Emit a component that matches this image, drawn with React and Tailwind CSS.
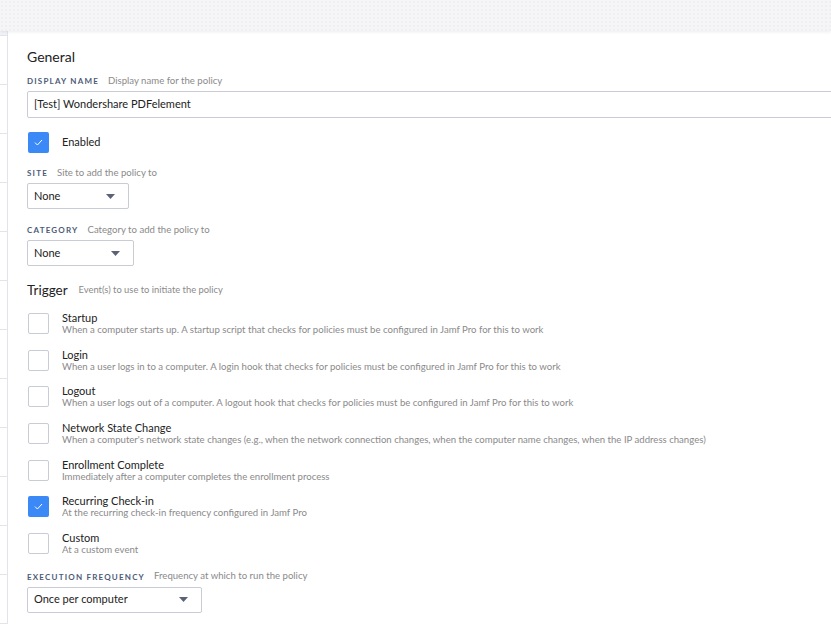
import React from "react";

const font = { fontFamily: "Lato, 'Open Sans', 'Liberation Sans', sans-serif" };

function Caret() {
  return (
    <svg width="9" height="5" viewBox="0 0 9 5" className="shrink-0">
      <path d="M0 0 L9 0 L4.5 5 Z" fill="#5b6275" />
    </svg>
  );
}

function Check({ checked }) {
  if (checked) {
    return (
      <div className="w-[21px] h-[21px] rounded-[2px] bg-[#3b89f6] flex items-center justify-center shrink-0">
        <svg width="9" height="7" viewBox="0 0 9 7">
          <path d="M1 3.6 L3.4 6 L8 1" fill="none" stroke="#fff" strokeWidth="1" />
        </svg>
      </div>
    );
  }
  return <div className="w-[21px] h-[21px] rounded-[2px] border border-[#c9ccd4] bg-white shrink-0" />;
}

function Label({ title, desc }) {
  return (
    <div className="flex items-center h-[12px] gap-[9px]">
      <span className="text-[8px] font-bold tracking-[1.2px] text-[#4d5b78] uppercase">{title}</span>
      <span className="text-[9.6px] text-[#8a8a8a]">{desc}</span>
    </div>
  );
}

function Select({ value, width }) {
  return (
    <div
      className="h-[26px] border border-[#c9ccd4] rounded-[2px] bg-white flex items-center justify-between pl-[6px] pr-[13px]"
      style={{ width }}
    >
      <span className="text-[11px] text-[#222]">{value}</span>
      <Caret />
    </div>
  );
}

const triggers = [
  ["Startup", "When a computer starts up. A startup script that checks for policies must be configured in Jamf Pro for this to work", false],
  ["Login", "When a user logs in to a computer. A login hook that checks for policies must be configured in Jamf Pro for this to work", false],
  ["Logout", "When a user logs out of a computer. A logout hook that checks for policies must be configured in Jamf Pro for this to work", false],
  ["Network State Change", "When a computer's network state changes (e.g., when the network connection changes, when the computer name changes, when the IP address changes)", false],
  ["Enrollment Complete", "Immediately after a computer completes the enrollment process", false],
  ["Recurring Check-in", "At the recurring check-in frequency configured in Jamf Pro", true],
  ["Custom", "At a custom event", false],
];

export default function App() {
  const sideRows = Array.from({ length: 12 });
  return (
    <div className="w-[831px] h-[624px] overflow-hidden bg-white relative" style={font}>
      <div
        className="h-[31px] bg-[#f5f5f7] relative z-10 shadow-[0_1px_3px_rgba(0,0,0,0.08)]"
        style={{
          backgroundImage: "radial-gradient(circle, rgba(0,0,0,0.025) 1px, transparent 1.5px)",
          backgroundSize: "4px 4px",
        }}
      />
      <div className="flex h-[593px]">
        <div className="w-[7px] shrink-0 flex flex-col">
          <div className="h-[47px] bg-[#f2f3f7] border-b border-[#e3e4ea]" />
          {sideRows.map((_, i) => (
            <div key={i} className="h-[49px] border-b border-[#e3e4ea] shrink-0" />
          ))}
        </div>
        <div className="flex-1 border-l border-[#e3e4ea] pl-[19px] flex flex-col">
          <div className="mt-[17px] h-[17px] text-[14px] leading-[17px] text-[#222]">General</div>
          <div className="mt-[10px]">
            <Label title="Display Name" desc="Display name for the policy" />
          </div>
          <div className="mt-[4px] h-[27px] border border-[#c9ccd4] rounded-[2px] -mr-[10px] flex items-center pl-[6px]">
            <span className="text-[11px] text-[#222]">[Test] Wondershare PDFelement</span>
          </div>
          <div className="mt-[14px] flex items-center pl-[1px]">
            <Check checked />
            <span className="ml-[13px] text-[11px] text-[#222]">Enabled</span>
          </div>
          <div className="mt-[14px]">
            <Label title="Site" desc="Site to add the policy to" />
          </div>
          <div className="mt-[4px]">
            <Select value="None" width={102} />
          </div>
          <div className="mt-[15px]">
            <Label title="Category" desc="Category to add the policy to" />
          </div>
          <div className="mt-[4px]">
            <Select value="None" width={107} />
          </div>
          <div className="mt-[16px] h-[16px] flex items-center gap-[11px]">
            <span className="text-[13.5px] text-[#222]">Trigger</span>
            <span className="text-[9.4px] text-[#8a8a8a]">Event(s) to use to initiate the policy</span>
          </div>
          <div className="mt-[15px] flex flex-col">
            {triggers.map(([t, d, c]) => (
              <div key={t} className="h-[36.67px] flex items-start pl-[1px]">
                <Check checked={c} />
                <div className="ml-[13px] flex flex-col -mt-[1px]">
                  <span className="text-[11px] leading-[12px] text-[#222]">{t}</span>
                  <span className="text-[9.6px] leading-[11px] text-[#8a8a8a]">{d}</span>
                </div>
              </div>
            ))}
          </div>
          <div className="mt-[1px]">
            <Label title="Execution Frequency" desc="Frequency at which to run the policy" />
          </div>
          <div className="mt-[4px]">
            <Select value="Once per computer" width={175} />
          </div>
        </div>
      </div>
    </div>
  );
}
